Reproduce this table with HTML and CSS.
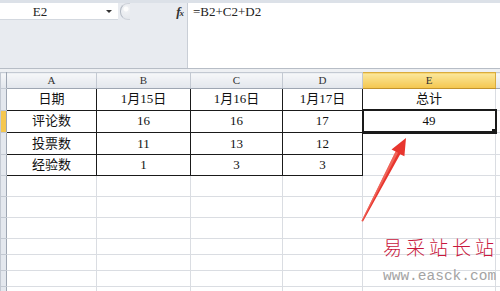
FILE: index.html
```html
<!DOCTYPE html>
<html lang="zh-CN">
<head>
  <meta charset="UTF-8" />
  <meta name="viewport" content="width=device-width, initial-scale=1.0" />
  <title>总计 - 工作表</title>
  <link rel="stylesheet" href="styles.css">
</head>
<body>
  <div class="sheet">

    <!-- BARRA DE FÓRMULAS -->
    <div class="topbar">
      <div class="left-panel">
        <div class="name-row">
          <div class="namebox">
            <span class="cellref">E2</span>
            <span class="dropdown"></span>
          </div>
          <div class="controls">
            <span class="grip"></span>
            <span class="fx">f<small>x</small></span>
          </div>
        </div>
      </div>
      <div class="formula">=B2+C2+D2</div>
    </div>
    <div class="divider"></div>

    <!-- CUADRÍCULA -->
    <table class="grid">
      <colgroup>
        <col class="c-rh"><col class="c-a"><col class="c-b"><col class="c-c"><col class="c-d"><col class="c-e"><col class="c-f">
      </colgroup>
      <tr class="head">
        <th class="rh"></th><th>A</th><th>B</th><th>C</th><th>D</th><th class="sel">E</th><th></th>
      </tr>
      <tr class="r">
        <td class="rh"></td>
        <td class="b">日期</td><td class="b">1月15日</td><td class="b">1月16日</td><td class="b">1月17日</td>
        <td>总计</td><td></td>
      </tr>
      <tr class="r">
        <td class="rh sel"></td>
        <td class="b">评论数</td><td class="b">16</td><td class="b">16</td><td class="b">17</td>
        <td class="active">49<span class="handle"></span></td><td></td>
      </tr>
      <tr class="r">
        <td class="rh"></td>
        <td class="b">投票数</td><td class="b">11</td><td class="b">13</td><td class="b">12</td>
        <td></td><td></td>
      </tr>
      <tr class="r">
        <td class="rh"></td>
        <td class="b">经验数</td><td class="b">1</td><td class="b">3</td><td class="b">3</td>
        <td></td><td></td>
      </tr>
      <tr class="r"><td class="rh"></td><td></td><td></td><td></td><td></td><td></td><td></td></tr>
      <tr class="r"><td class="rh"></td><td></td><td></td><td></td><td></td><td></td><td></td></tr>
      <tr class="r"><td class="rh"></td><td></td><td></td><td></td><td></td><td></td><td></td></tr>
      <tr class="s"><td class="rh"></td><td></td><td></td><td></td><td></td><td></td><td></td></tr>
      <tr class="s"><td class="rh"></td><td></td><td></td><td></td><td></td><td></td><td></td></tr>
      <tr class="s"><td class="rh"></td><td></td><td></td><td></td><td></td><td></td><td></td></tr>
      <tr class="s"><td class="rh"></td><td></td><td></td><td></td><td></td><td></td><td></td></tr>
    </table>

    <!-- FLECHA -->
    <svg class="arrow" width="500" height="291" viewBox="0 0 500 291">
      <polygon points="361.5,221 395.6,151.6 391.5,149.5 406,138 404.4,156.3 400.2,154.2 363,221.6" fill="#e8352e"/>
      <polygon points="361.5,221 395.6,151.6 398,152.8 362.3,221.3" fill="#f27a6c" opacity="0.7"/>
    </svg>

    <!-- MARCA -->
    <div class="mark">
      <div class="mark-cn">易采站长站</div>
      <div class="mark-url">www.easck.com</div>
    </div>
  </div>
</body>
</html>
```

FILE: styles.css
```css
body {
  margin: 0;
  padding: 0;
  background-color: white;
  font-family: "Liberation Serif", "Noto Sans CJK SC", serif;
}

.sheet {
  position: relative;
  width: 500px;
  height: 291px;
  overflow: hidden;
}

/* barra superior */
.topbar {
  display: flex;
  height: 65px;
  border-top: 3px solid #dce1e8;
  background-color: #e8ebf0;
}

.left-panel {
  width: 187px;
  border-right: 1px solid #c9ced6;
}

.name-row {
  display: flex;
  height: 17px;
}

.namebox {
  position: relative;
  width: 118px;
  background-color: white;
  border-bottom: 1px solid #d3d8df;
  text-align: center;
  font-size: 13px;
  line-height: 17px;
  color: #222;
}

.cellref {
  margin-left: -38px;
}

.dropdown {
  position: absolute;
  top: 7px;
  right: 6px;
  border-left: 3px solid transparent;
  border-right: 3px solid transparent;
  border-top: 3px solid #333;
}

.controls {
  flex: 1;
  display: flex;
  align-items: center;
  justify-content: space-between;
  padding: 0 4px 0 2px;
}

.grip {
  width: 9px;
  height: 15px;
  border-radius: 8px 0 0 8px;
  border-left: 1px solid #b3b9c3;
  border-top: 1px solid #cfd3da;
  border-bottom: 1px solid #cfd3da;
  background: radial-gradient(circle at 5px 5px, #fdfdfd 0, #fdfdfd 2px, #eef0f3 3px, #e3e6eb 100%);
}

.fx {
  font-style: italic;
  font-weight: bold;
  font-size: 13px;
  color: #333;
  letter-spacing: -1px;
}

.fx small {
  font-size: 9px;
}

.formula {
  flex: 1;
  background-color: white;
  padding: 1px 5px;
  font-size: 13px;
  line-height: 15px;
  color: #222;
}

.divider {
  height: 3px;
  border-top: 1px solid #b7bdc6;
  background-color: #eef0f3;
}

/* cuadrícula */
.grid {
  table-layout: fixed;
  border-collapse: collapse;
  width: 500px;
  font-size: 13px;
  color: #111;
}

.c-rh { width: 6px; }
.c-a { width: 90px; }
.c-b { width: 94px; }
.c-c { width: 92px; }
.c-d { width: 80px; }
.c-e { width: 133px; }
.c-f { width: 5px; }

.grid td,
.grid th {
  padding: 0;
  border: 1px solid #dadde2;
  text-align: center;
  overflow: hidden;
  white-space: nowrap;
}

.head th {
  height: 15px;
  font-weight: normal;
  font-size: 11px;
  line-height: 13px;
  color: #333;
  background: linear-gradient(#f6f7f9, #e2e6ec);
  border-color: #c3c9d2;
  border-bottom-color: #9ea6b2;
}

.head th.sel {
  background: linear-gradient(#fbe79c, #f4c64d);
  border-color: #d9ac3e;
  border-bottom-color: #c2932c;
}

.r td {
  height: 20px;
  line-height: 18px;
}

.s td {
  height: 15px;
}

.grid .rh {
  background-color: #e4e8ee;
  border-color: #c3c9d2;
  border-right-color: #9ea6b2;
}

.grid .rh.sel {
  background-color: #f5c74f;
}

.grid td.b {
  border: 1px solid #1a1a1a;
}

.grid td.active {
  position: relative;
  border: 2px solid #1a1a1a;
  border-bottom-width: 3px;
  line-height: 20px;
}

.handle {
  position: absolute;
  right: -3px;
  bottom: -4px;
  width: 5px;
  height: 5px;
  background-color: #1a1a1a;
  border: 1px solid white;
}

/* flecha y marca */
.arrow {
  position: absolute;
  top: 0;
  left: 0;
}

.mark {
  position: absolute;
  left: 383px;
  top: 234px;
  width: 117px;
}

.mark-cn {
  font-family: "Noto Sans CJK SC", serif;
  font-size: 19px;
  line-height: 26px;
  letter-spacing: 4px;
  color: #c8173c;
  font-weight: 300;
}

.mark-url {
  margin-top: 9px;
  font-family: "Liberation Mono", monospace;
  font-size: 14.5px;
  line-height: 14px;
  color: #a3a3a3;
}
```
